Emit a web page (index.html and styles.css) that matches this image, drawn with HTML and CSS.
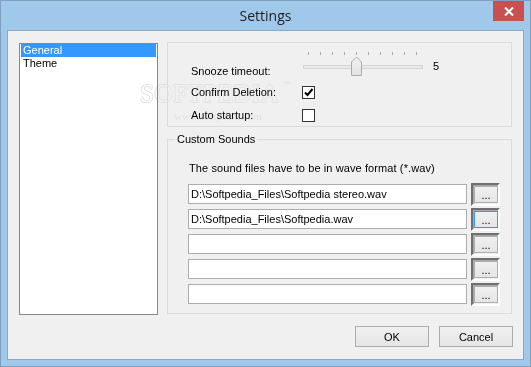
FILE: index.html
```html
<!DOCTYPE html>
<html lang="en">
<head>
  <meta charset="UTF-8" />
  <title>Settings</title>
  <link rel="stylesheet" href="styles.css">
</head>
<body>
  <div class="window">
    <div class="titlebar">
      <span class="title">Settings</span>
      <button class="close" aria-label="Close">
        <svg width="10" height="9" viewBox="0 0 10 9"><path d="M1 0.5 L9 8.5 M9 0.5 L1 8.5" stroke="#fff" stroke-width="2"/></svg>
      </button>
    </div>

    <div class="client">
      <div class="main">
        <ul class="list">
          <li class="selected">General</li>
          <li>Theme</li>
        </ul>

        <div class="panel">
          <!-- general options -->
          <div class="group options">
            <div class="row slider-row">
              <span class="label">Snooze timeout:</span>
              <svg class="slider" width="122" height="26" viewBox="0 0 122 26">
                <g stroke="#a8a8a8" stroke-width="1">
                  <path d="M6.5 2V5 M18.5 2V5 M30.5 2V5 M42.5 2V5 M54.5 2V5 M66.5 2V5 M78.5 2V5 M90.5 2V5 M102.5 2V5 M114.5 2V5"/>
                </g>
                <rect x="1.5" y="15.5" width="119" height="3" fill="#e7eaea" stroke="#d6d6d6"/>
                <defs>
                  <linearGradient id="thumb" x1="0" y1="0" x2="0" y2="1">
                    <stop offset="0" stop-color="#f2f2f2"/>
                    <stop offset="1" stop-color="#e3e3e3"/>
                  </linearGradient>
                </defs>
                <path d="M49.5 12 L54.5 7 L59.5 12 V25.5 H49.5 Z" fill="url(#thumb)" stroke="#acacac"/>
              </svg>
              <span class="value">5</span>
            </div>
            <div class="row">
              <span class="label">Confirm Deletion:</span>
              <span class="check">
                <svg width="11" height="11" viewBox="0 0 11 11"><path d="M2 5.5 L4.5 8 L9.5 2" fill="none" stroke="#000" stroke-width="2"/></svg>
              </span>
            </div>
            <div class="row">
              <span class="label">Auto startup:</span>
              <span class="check"></span>
            </div>
          </div>

          <!-- sounds -->
          <fieldset class="group sounds">
            <legend>Custom Sounds</legend>
            <p class="hint">The sound files have to be in wave format (*.wav)</p>
            <div class="files">
              <div class="file-row">
                <div class="field">D:\Softpedia_Files\Softpedia stereo.wav</div>
                <span class="browse"><button>...</button></span>
              </div>
              <div class="file-row">
                <div class="field">D:\Softpedia_Files\Softpedia.wav</div>
                <span class="browse"><button class="focused">...</button></span>
              </div>
              <div class="file-row">
                <div class="field"></div>
                <span class="browse"><button>...</button></span>
              </div>
              <div class="file-row">
                <div class="field"></div>
                <span class="browse"><button>...</button></span>
              </div>
              <div class="file-row">
                <div class="field"></div>
                <span class="browse"><button>...</button></span>
              </div>
            </div>
          </fieldset>
        </div>
      </div>

      <div class="actions">
        <button class="btn">OK</button>
        <button class="btn">Cancel</button>
      </div>
    </div>

    <div class="watermark">SOFTPEDIA<sup>™</sup><span class="site">www.softpedia.com</span></div>
  </div>
</body>
</html>
```

FILE: styles.css
```css
* {
  box-sizing: border-box;
}

body {
  margin: 0;
  background: #fff;
  font-family: "Liberation Sans", Arial, sans-serif;
  font-size: 11px;
  color: #000;
}

/* --- window frame --- */
.window {
  position: relative;
  width: 531px;
  height: 367px;
  background: #9fc8ea;
  border: 1px solid #7f9fbf;
  display: flex;
  flex-direction: column;
}

.titlebar {
  height: 29px;
  display: grid;
  grid-template-columns: 1fr auto 1fr;
}
.title {
  grid-column: 2;
  font-family: "Open Sans", sans-serif;
  font-size: 14px;
  color: #1e1e1e;
  line-height: 30px;
}
.close {
  grid-column: 3;
  justify-self: end;
  align-self: start;
  width: 31px;
  height: 20px;
  margin-right: 6px;
  border: none;
  padding: 0;
  background: #c75050;
  display: flex;
  align-items: center;
  justify-content: center;
}

.client {
  flex: 1;
  margin: 0 6px 6px;
  background: #f0f0f0;
  border: 1px solid #8ea8bf;
  padding: 11px 10px 0 11px;
  display: flex;
  flex-direction: column;
}

.main {
  display: flex;
  gap: 9px;
}

/* --- list --- */
.list {
  list-style: none;
  margin: 1px 0 0;
  padding: 0 1px;
  width: 139px;
  height: 272px;
  background: #fff;
  border: 1px solid #828790;
}
.list li {
  height: 13px;
  line-height: 13px;
  padding-left: 2px;
}
.list li.selected {
  background: #3399ff;
  color: #fff;
}

/* --- right side --- */
.panel {
  width: 345px;
  display: flex;
  flex-direction: column;
}
.group {
  border: 1px solid #dcdcdc;
}

.options {
  height: 85px;
  padding: 7px 0 0 23px;
}
.row {
  display: grid;
  grid-template-columns: 111px auto;
  align-items: center;
  justify-items: start;
  height: 23px;
}
.label {
  line-height: 13px;
}
.slider-row {
  grid-template-columns: 111px 122px auto;
  align-items: start;
  height: 31px;
}
.slider-row .label {
  margin-top: 15px;
}
.slider {
  display: block;
}
.value {
  margin: 10px 0 0 9px;
  line-height: 13px;
}
.check {
  width: 13px;
  height: 13px;
  background: #fff;
  border: 1px solid #333;
  display: flex;
  align-items: center;
  justify-content: center;
}

/* --- custom sounds --- */
.sounds {
  margin: 6px 0 0;
  height: 181px;
  min-width: 0;
  padding: 16px 0 0 20px;
}
.sounds legend {
  margin-left: -13px;
  padding: 0 2px;
  line-height: 13px;
}
.hint {
  margin: 0 0 8px 1px;
  line-height: 13px;
  letter-spacing: 0.1px;
}
.files {
  display: flex;
  flex-direction: column;
  gap: 3px;
}
.file-row {
  display: flex;
  align-items: center;
  gap: 4px;
  height: 22px;
}
.field {
  width: 279px;
  height: 20px;
  background: #fff;
  border: 1px solid #abadb3;
  padding: 0 2px;
  line-height: 18px;
  white-space: nowrap;
}
.browse {
  width: 29px;
  height: 23px;
  border-style: solid;
  border-width: 2px;
  border-color: #6f6f6f #fff #fff #6f6f6f;
  box-shadow: inset 1px 1px 0 #a9a9a9;
  padding: 1px 0 0 1px;
}
.browse button {
  display: block;
  width: 24px;
  height: 17px;
  padding: 0;
  border: 1px solid #adadad;
  background: linear-gradient(#f0f0f0, #e5e5e5);
  font-family: "Liberation Sans", Arial, sans-serif;
  font-size: 11px;
  line-height: 17px;
  color: #000;
}
.browse button.focused {
  border-color: #3399ff;
}

/* --- buttons --- */
.actions {
  display: flex;
  justify-content: flex-end;
  gap: 10px;
  margin-top: 11px;
}
.btn {
  width: 74px;
  height: 21px;
  padding: 0;
  border: 1px solid #acacac;
  background: linear-gradient(#f0f0f0, #e5e5e5);
  font-family: "Liberation Sans", Arial, sans-serif;
  font-size: 11px;
  color: #000;
}

/* --- watermark over the dialog, darken keeps the labels readable --- */
.watermark {
  position: absolute;
  left: 139px;
  top: 79px;
  font-family: "Liberation Serif", serif;
  font-size: 25px;
  letter-spacing: 0.5px;
  color: #fff;
  text-shadow: 1px 0 0 #e0e0e0, -1px 0 0 #e0e0e0, 0 1px 0 #e0e0e0, 0 -1px 0 #e0e0e0;
  mix-blend-mode: darken;
  pointer-events: none;
}
.watermark sup {
  font-family: "Liberation Sans", sans-serif;
  font-size: 7px;
  vertical-align: top;
  margin-left: 4px;
  color: #e0e0e0;
  text-shadow: none;
}
.watermark .site {
  position: absolute;
  left: 34px;
  top: 30px;
  font-size: 11px;
  letter-spacing: 0;
  color: #e2e2e2;
  text-shadow: none;
  white-space: nowrap;
}
```
